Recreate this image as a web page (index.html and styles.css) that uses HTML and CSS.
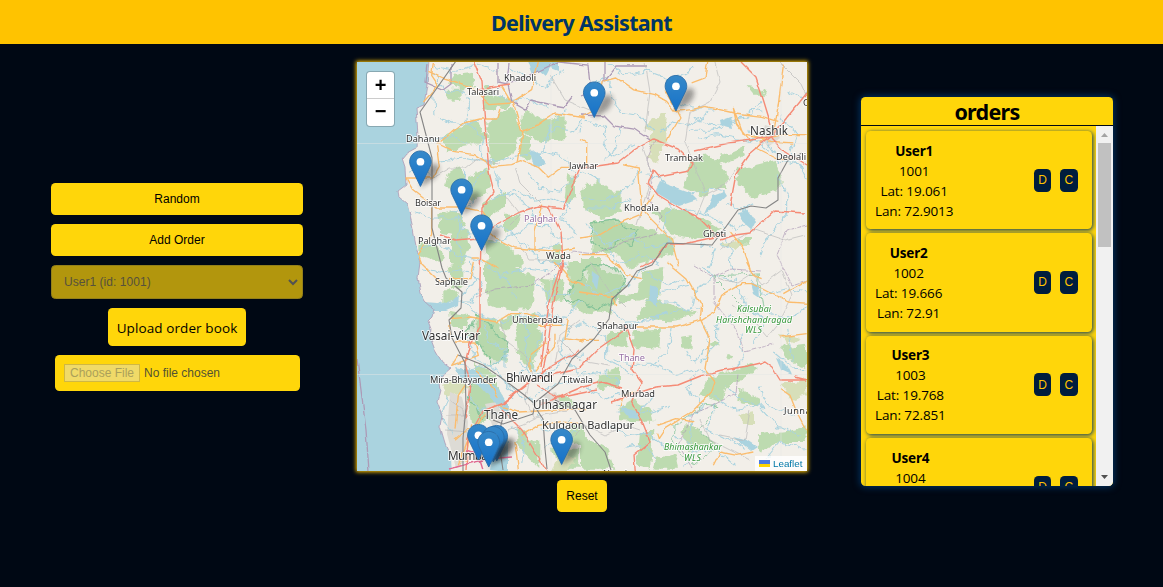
FILE: index.html
```html
<!DOCTYPE html>
<html lang="en">
<head>
<meta charset="utf-8">
<title>Delivery Assistant</title>
<link rel="stylesheet" href="styles.css">
</head>
<body>
<header class="topbar"><h1>Delivery Assistant</h1></header>
<main class="layout">
  <section class="controls">
    <button class="btn wide">Random</button>
    <button class="btn wide">Add Order</button>
    <div class="select"><span>User1 (id: 1001)</span><svg width="10" height="7" viewBox="0 0 10 7"><path d="M1 1l4 4 4-4" fill="none" stroke="#525252" stroke-width="2"/></svg></div>
    <label class="upload">Upload order book</label>
    <div class="file"><span class="choose">Choose File</span><span>No file chosen</span></div>
  </section>

  <section class="map-column">
    <div class="map">
      <svg class="tiles" viewBox="357 62 450 409" width="450" height="409">
        <defs>
          <filter id="rough" x="-5%" y="-5%" width="110%" height="110%"><feTurbulence type="fractalNoise" baseFrequency=".11" numOctaves="3" seed="4"/><feDisplacementMap in="SourceGraphic" scale="9" xChannelSelector="R" yChannelSelector="G"/></filter>
          <filter id="wavy" x="-5%" y="-5%" width="110%" height="110%"><feTurbulence type="fractalNoise" baseFrequency=".09" numOctaves="2" seed="8"/><feDisplacementMap in="SourceGraphic" scale="4" xChannelSelector="R" yChannelSelector="G"/></filter>
          <filter id="soft" x="-50%" y="-50%" width="200%" height="200%"><feGaussianBlur stdDeviation="3"/></filter>
          <linearGradient id="pin-fill" x1="0" y1="0" x2="0" y2="1"><stop offset="0" stop-color="#3689c9"/><stop offset="1" stop-color="#1672c9"/></linearGradient>
          <symbol id="pin" viewBox="-12.5 -41 45 45" overflow="visible">
            <path d="M0 0L4-16Q9-28 18-26Q24-21 15-10Z" fill="#222" opacity=".42" filter="url(#soft)"/>
            <path d="M0-40.5C-6.7-40.5-12-35.1-12-28.5c0 2.4.8 4.5 1.7 6.3L0-1l10.3-21.2c.9-1.8 1.7-3.9 1.7-6.3C12-35.1 6.7-40.5 0-40.5z" fill="url(#pin-fill)" stroke="#2a6da8"/>
            <circle cy="-28.5" r="4.3" fill="#fff"/>
          </symbol>
        </defs>
        <rect x="357" y="62" width="450" height="409" fill="#f2efe9"/>

        <g class="forest" filter="url(#rough)">
          <g transform="translate(355 58) scale(.3333)">
            <path d="M300 50l50-6 8 40-38 14-40-20zM275 95l45 0 0 35-45-3zM385 85l30 10 10 65-40-8zM420 110l60 18-30 28-35-18zM270 230l90-44 40 50-30 20-60 10-30 24-10-25zM400 190l70-45 30 75-30 70-60 30-10-70zM505 150l60 35 64-10 0 72-70 5-60-30zM500 225l35 20-5 60-35-10zM280 345l40-20 10 50-10 40-50-30zM340 355l60-30 8 60-50 46-20-10zM385 440l65-45 0 50-65 45zM250 470l50-15 30 40-20 40-50-10zM190 555l50 0 30 45-25 10-55-20zM285 495l50 20 10 60-20 50-40-10zM390 540l50 10 60 50 0 30-100 0zM640 350l20 20 0 50-30 20zM450 470l50 0-20 40-30 20zM595 560l25 10-5 50-30-10z"/>
          </g>
          <g transform="translate(580 58) scale(.3333)">
            <path d="M0 400l50-35 40 30 35 5 0 50-55 35-60-40zM500 90l50 5 10 18-40 0zM330 300l60-10 50 50 0 50-50 0-10 30-70-30zM390 310l100-45 5 30-60 20-50 20zM470 335l120-30 20 60-40 40-50 15-50-45zM40 490l90 0 90 30 60 20 0 50-140 40-20-40-80-10zM220 460l70-10 70 30 60 35-50 30-90-15zM0 600l60 0 0 40-60 0zM470 540l50 0-10 20-40 0z"/>
          </g>
          <g transform="translate(355 262) scale(.3333)">
            <path d="M275 10l50-10 0 70-40 10zM390 0l90 15 55 30 0 95-70 5-65-15-10-60zM560 45l65 5 0 70-50-5zM265 85l50 0-10 30-40 10zM365 165l50 5 40 50 0 80-60-10-30-60zM480 180l60-30 20 90-30 80-40-35zM285 150l60 10-5 35-50 0zM350 370l80 0 10 40-20 60-75 20-10-80zM360 305l60 30 0 20-60-10zM640 0l50 0 0 150-40-15zM430 170l70-20-40 50-30-10zM490 500l60 50 0 65-60-60zM590 560l80 0 0 60-60 0zM650 490l40 0 0 70-60-30zM580 410l60-5 30 30-60 0z"/>
          </g>
          <g transform="translate(580 262) scale(.3333)">
            <path d="M30 20l85 20 25 30-40 60-80 30-25-35zM190 25l60-10-10 90-60 5-60 20-5-30 60-5zM210 100l70 30 80 30-90 15-100-5zM160 205l80-5-5 60-75-5zM85 210l60 0 0 50-65-10zM300 225l35-5 0 40-30 0zM50 340l70-20 0 55-60 10zM115 440l50-30 50 40 5 30-100-5zM180 510l40 0-10 110-40-10zM380 350l90-30 50-15 10 20-90 50-20 45-60-20zM480 380l60 30-5 20-60-10zM600 255l75-10 7 70-60-20zM530 520l90-10 60-20 0 50-80 0-60 30zM310 490l40 5 55 50-80 20-20-30zM440 275l20 5-5 12-20 0zM390 240l30 5-20 15zM0 520l80 40 20 60-100 0zM230 590l60-10 10 40-80 0zM0 80l80 20 15 55-40-10-55-30z"/>
          </g>
        </g>
        <g class="scrub" filter="url(#rough)">
          <path d="M661 113l6 0-2 28-8 24-8-8 2-24-8-4zM722 243l18-2-6 10-12-4zM780 385l25-5 2 15-15 5zM560 450l15 10-8 12-16 0zM440 385l20-8 10 12-22 8zM780 333l20 5-15 8zM740 415l14-3 0 12-10 0z"/>
        </g>

        <g class="protected" filter="url(#rough)">
          <path d="M592 223l24-3 10 9 12 2-7 14-10-4-16 8-14-7zM590 265l26 2 9 15-14 22-16 6-14-9-12 3-6-8 12-10zM476 317l14 6 4 13 14 5-4 18-12 6-12-20-7-8-8-6 8-6zM470 385l16-4 12 14-4 20-14 4-4-14-8-4z"/>
          <path class="outline" d="M713 276l45-2 6 32-10 6-16-9-22-22zM674 426l32-22 12 2-12 15-5 9 14 17-20 18-15-10-7-16z"/>
        </g>

        <g class="urban">
          <path d="M450 392l12 5 6 25-3 39-9 7-9-34zM765 125l10 3 5 10-12 9-7-10zM485 404l11-2 8 16-11 10zM544 395l12-3 5 12-13 6z"/>
        </g>

        <g class="water" filter="url(#wavy)">
          <path d="M350 55L429 55 427 85 424 105 416 108 418 135 417 148 406 154 402 159 405 168 406 185 398 191 399 197 407 204 412 224 416 245 420 262 418 278 421 293 425 301 434 309 432 317 428 321 431 329 430 337 435 350 442 362 451 369 444 375 439 382 440 390 437 402 442 415 440 426 445 443 451 457 452 475 350 475z"/>
          <path d="M528 61l30 0 0 10-8-3-4 8-6-5-7 4zM530 151l9 4 7 9-12 3zM720 120l11-4 2 12-12-3zM660 182l15 5 14 5 8 8-18 6-24-14zM713 195l10-4 3 5-13 12-8 5zM738 212l10-2 8 12-4 8-10-9zM593 272l6 4-2 14-5-8zM650 284l7 3 0 20-8-6zM751 282l8 4 1 12-6-4zM776 358l10 5 6 12-11-5zM620 407l16 4 3 8-10-1zM733 436l12 3 12 8-6 4zM425 302l24 2 10-10-1 12-12 5-14 0zM455 367l24 5 19 16 10 17-1 12-13-16-12-14-22-9zM490 470l4-28 8-12 6 10 0 32z"/>
        </g>
        <g class="river" filter="url(#rough)">
          <g transform="translate(355 58) scale(.3333)">
            <path d="M240 25l60 15 70-20 60 20M235 50l35 50 60 0 10 30 0 50M235 100l5 70M460 25l50 30 60 30 60-50M400 90l60 40 60-10 60 30M330 185l50 50 0 60 30 25M250 310l70-10 50 10 50 0 90-20 60-10 60 20 40 60M230 250l60-20 50 30M395 330l-40 60 0 50-60 20M330 330l-10 130-10 80 10 80M420 330l20 80 60 10 40 60M410 420l80-20 50 30 50-10 60 30M520 340l30 50 60 10 60-50M160 340l50-10 30 30M170 460l60 20 70 0 50 60 60 10 60-20 60 50 80-20M420 500l60 30 40-30 60 0 20 40 60 0M195 570l60-10 50 30 80 20M520 560l40 50 80 10M640 150l-50 50-20 60-30 30M560 250l40-40 50 10 30-30M250 180l60 20 60-10M650 420l-30 60 50 50"/>
          </g>
          <g transform="translate(580 58) scale(.3333)">
            <path d="M80 20l50 30 70-10 80 30 60-40M20 90l60-30 20 30M90 100l30 60 60 10 40 50M20 190l60 20-10 50 30 40 60-40M120 210l-20 80-30 20M240 220l40-30 50 10 60-40M290 130l50 20 60 0M330 220l70 0 40-30 60-10 40-50M340 180l60 20 70-10 40-40 40 10M360 240l50-10 60 10 60 10 40 30M620 100l40 20 20-20M500 220l60 30 40 60 60 10 20 40M200 350l40 10 40 40 60 10 60-20 30 10M440 430l40 30 40-20M300 460l60 0 60 30 20 60M420 560l30 20 10 60M480 450l40 30-50 40-20-30M590 350l30 60 0 60-60 70-20 60M10 420l60 10 60-30 50-60M0 340l60 30M20 500l60 60 80-30 40 40 80-20M280 430l-30 80 30 60M360 560l50 10-20 60M600 180l50 40-20 60 40 60M80 570l40 50 60-30 60 30M20 450l70 0 70-30M0 220l10-50"/>
          </g>
          <g transform="translate(355 262) scale(.3333)">
            <path d="M200 20l60 10 60-10 60 40-30 60M220 140l60-20 60 0 40-40M320 120l50 40 70 20 60-20 60 0 60 10 60-50M280 220l60 10 20 60 60 30 60 90M290 300l60 20 60-10 50-30M380 170l20 70 50 20 0 60M490 150l30 60-10 60 30 60M530 60l60 40 70-10M550 150l60 40 70 0M430 340l60 60 50 20 20 60M530 420l50-50 70-10 40-30M490 300l50 40 50-10 40-50 60 0M560 210l-20 70-50 60M640 200l-30 70 60 60M280 400l-20 60 30 60M340 400l30 40 60 10M470 490l40 50-10 60M560 500l50 10 40-40M570 560l40-40 60-10M400 10l60 50 20 50M610 20l-30 80 0 70M440 40l70-20 80 10M345 0l20 60-50 40"/>
          </g>
          <g transform="translate(580 262) scale(.3333)">
            <path d="M0 60l60 40 80-30 60-60M90 140l60 50 60-20 60-20 90-10M140 180l70 0 50-30M10 180l70 50 0 60 80 50M100 290l60 20 70 0 60 30 60-20 50 20M280 190l-20 80-50 50M370 190l20 60-50 50-20-30M370 10l30 40-60 40-10 60-50-30-80 0M410 45l60 10 30 80 60 40-40 70M510 60l40 40 80-20 50 10M560 150l60 20 60-30M460 160l-50 30 0 60-50 50M480 220l10 70-30 30M580 270l60 50 40 0M350 330l-30 50 60 50-60 40M440 370l40 40 60 20 50 60 70 30M400 400l60 40 60-10M410 430l-30 70 60 30 60 30M540 370l20 60 80 30M220 400l-40 50-70 0M110 430l60 30 100-30M80 480l60 40 60-10 60 50M280 520l70 50 60-10 60 50M330 480l10 100-30 30M620 200l20 100M200 30l60 40 60-20M240 90l90-20M10 340l60-10 50 30M20 380l60 30 50-20M130 560l60-10 40 50M550 600l50-60 80 20"/>
          </g>
        </g>

        <g class="boundary" filter="url(#wavy)">
          <path d="M357 360l4 30 5 40 3 42M427 64l-2 18 18 8 8-6 0-20M498 63l0 20 10 2 4 17 14 8 5-10 16 4 17 3 8-10M509 63l-2 20 13-3 38-18 30 3 2 20 4 6-12 5M580 115l24 1 10 10 20 3 16 11M604 62l0 20 13-16 30 0"/>
          <path class="coast" d="M429 60L427 85 424 105 416 108 418 135 417 148 406 154 402 159 405 168 406 185 398 191 399 197 407 204 412 224 416 245 420 262 418 278 421 293 425 301 434 309 432 317 428 321 431 329 430 337 435 350 442 362 451 369 444 375 439 382 440 390 437 402 442 415 440 426 445 443 451 457"/>
          <path class="thin" d="M655 140l-8 20 6 18-6 20 15 18-6 18-32 8-30 12-22-3-20 20-20 14-36 4-20 8M694 265l20 12 18-8 28 2M714 278l0 24 24 30 6 20 30-8M738 375l-2 18-26 14-18 7-6 16-8 14 14 24M807 225l-20 5-10 25 15 30 15-5"/>
        </g>

        <g class="minor" filter="url(#wavy)">
          <path d="M550 75l15 25 25 10M645 62l5 30-5 40M715 62l5 20-10 20-20 10-5 30 20 50M780 62l20 20 7 15M430 180l20-12 15 0 10-8 25 3M515 168l5 15 20 20M505 195l15 20-10 10M520 245l10 15 20 0 20 10M642 145l10 30-15 50M720 250l15-10 20-10 30 10 20-5M735 170l-10 15-20 10-8 20M590 262l20 30 15 15M580 320l-20 15-5 30M500 320l5 20 20 15 7 20M508 430l15-5 20-10 25-4M570 440l15-15 20 10 20-10 15 5M717 278l20 5 15-10 10 12 20-15 10 25-15 30-10 12-10-12-25-20M450 400l13 10 2 20M447 415l20 0M445 430l22 2M750 410l-5 30-25-5M700 420l10 20 40 20M530 380l-5 20 10 18M560 340l20 20 30 5"/>
        </g>
        <g class="secondary" filter="url(#wavy)">
          <g transform="translate(355 58) scale(.3333)"><path d="M220 40l45 20 80 25 60 55 70-5 25 85 40-15 60-40 90 15M235 12l-5 40 20 30-45 50M470 135l-30-50M475 130l55-35 20-83M245 260l80-65 50-12 50 0 10-30M245 255l50 25 60 10 55 35 60-5 30-12 50 20 30 30 40-30 30 0M245 265l8 60-20 35-80 0 20 35 70 55 90 0 50 10 20 30M230 450l0 80-40 60 10 25M390 510l40 35 50 25 130 10 50-10M560 440l-20 80 0 60M350 600l20 0 60 30M505 215l-15 95"/></g>
          <g transform="translate(580 58) scale(.3333)"><path d="M0 180l55-30 15-80 40-10 50 35 65 15 35 20 25 30 50-5 40-10 90 20 80 10 50 15M285 150l15 30-30 50-10 20M385 0l-10 60-40 15M280 140l-25-40M130 320l45 10 10 120 30 35 60 60 20 80M0 540l60-10 60-35 60-25 40-60M450 520l40 50 20 60M610 20l-15 120-15 90M460 150l30 80 80 20 70 5M460 150l10 50 40 50M560 240l50-10 70 0M560 235l-30 35 60 30 80 5M0 245l20 10 0 70M0 590l80 0 40 40"/></g>
          <g transform="translate(355 262) scale(.3333)"><path d="M195 0l60 60 40-10 50 0 10-50M285 170l60-5 80 15 40-25 50 0 60 20M300 240l60 0 10 40-80 30 20-30M360 330l50 40 20 40M285 180l0 50M430 430l60 20 200-10M500 520l50-30 60-10 80 5M420 430l-40 40-40 60-30 80M300 500l10-100 20-30M300 535l40-35M330 600l20-110M480 540l10 80M540 325l60-80 0-30M600 0l50 60 40 10M550 190l70 0M640 170l-10 60 60 10M525 330l0-50 50-40"/></g>
          <g transform="translate(580 262) scale(.3333)"><path d="M110 0l30 40 45 10M260 0l60 50 45 80-5 45-70 20-125 0M360 170l30 60-15 90 30 40-10 30-60 60-80 50-20 30-5-15M365 175l40-25 20-50 60-35 30 0 50 25 60 30 70 5M500 0l20 40 25 10M600 225l80-10M600 380l30 20 20 50 32 60M0 235l60 0M120 435l10-35 45-10M230 490l60-20 50 10M400 610l20-40 50 10 50-10M0 90l100 15 10 30M680 55l-70 40"/></g>
        </g>
        <g class="primary" filter="url(#wavy)">
          <path d="M474 62l8 20 2 30 5 60 5 20-12 15-1 34-1 37 0 50-10 15-5 20 5 20-2 20-3 15M478 90l12-2 20-3M741 62l15 15 8 25 7 23M807 93l-18 22-18 22-42 6-35 8M771 136l-21 18-14 20-6 32M771 138l14 14 22 14M583 168l35-5 15-12 20-12 25 10 15 15-4 7-30 6-6-7-5 13 10 12 25 15 15 7 17 17 10 1M720 240l15-5 15-2 25-22 30 2M480 235l15-10 25-13 18-6 25 3 8-20 10-25M440 235l15 5 25-2M548 207l13 25 2 30-10 44-6 46-6 27M720 236l-37 8-15 0-12 15-15 8M807 380l-27 0-8-13-7-5-17 4-25 4-20 5-25 10-22 2-45 15M807 380l-12-3M562 262l-13 40-8 65M580 350l-30 17-47 37M625 325l9 25-2 20 10 13-10 17 10 22 8 20-16 13 2 25M503 403l-20 8-15 27-2 32M503 403l30-24 45-10 20-20 28-20M540 405l42-18 20-5 20 6M502 410l20 20 25 42M537 385l20 13 40-8"/>
        </g>
        <path class="primary strong" d="M450 469l17-5 20-5 25-2M466 450l12 4 5 16" filter="url(#wavy)"/>
        <g class="rail">
          <path d="M456 61L420 112l12 46 0 70 10 40 4 10 16 14-1 16-12 12 3 18 13 25 1 45-3 30 0 35M458 355l25 10 20 14 20 15 12 10-2 10-30 10-10-4M503 417l-5 20 5 33M533 404l25-20 14-25 22-20 15-20 3-20 15-13 10-15 15-6 15-22 45 2 13-17 13-18 13-4 15 2 12-8 0-22 10-18 14-7M533 404l10 15 2 30 2 20M555 400l20 10 15 25 15 17 6 18"/>
        </g>
        <path d="M551 62v409M781 62v409M357 143.5h450M357 374.5h450" stroke="#e5e7e5" stroke-width=".7" opacity=".7"/>

        <g class="places">
          <text x="504" y="81" textLength="32">Khadoli</text>
          <text x="467" y="95" textLength="32">Talasari</text>
          <text x="406" y="142" textLength="34">Dahanu</text>
          <text x="415" y="206" textLength="26">Boisar</text>
          <text x="418" y="244" textLength="33">Palghar</text>
          <text x="524" y="222" textLength="33" class="district">Palghar</text>
          <text x="569" y="169" textLength="29">Jawhar</text>
          <text x="546" y="259" textLength="25">Wada</text>
          <text x="750" y="135" textLength="38" class="city">Nashik</text>
          <text x="665" y="161" textLength="38">Trambak</text>
          <text x="776" y="160" textLength="30">Deolali</text>
          <text x="624" y="211" textLength="35">Khodala</text>
          <text x="703" y="237" textLength="23">Ghoti</text>
          <text x="803" y="106">C</text>
          <text x="435" y="285" textLength="33">Saphale</text>
          <text x="512" y="323" textLength="51">Umberpada</text>
          <text x="422" y="340" textLength="58" class="town">Vasai-Virar</text>
          <text x="430" y="383" textLength="67">Mira-Bhayander</text>
          <text x="506" y="382" textLength="47" class="town">Bhiwandi</text>
          <text x="562" y="383" textLength="31">Titwala</text>
          <text x="533" y="409" textLength="64" class="town">Ulhasnagar</text>
          <text x="484" y="419" textLength="34" class="town">Thane</text>
          <text x="542" y="429" textLength="92" class="town small">Kulgaon Badlapur</text>
          <text x="448" y="460" textLength="42" class="town">Mumbai</text>
          <text x="597" y="329" textLength="41">Shahapur</text>
          <text x="619" y="361" textLength="26" class="district">Thane</text>
          <text x="621" y="397" textLength="34">Murbad</text>
          <text x="784" y="414" textLength="31">Junnar</text>
          <text x="603" y="477" textLength="24">Neral</text>
          <text x="737" y="312" textLength="34" class="reserve">Kalsubai</text>
          <text x="716" y="323" textLength="76" class="reserve">Harishchandragad</text>
          <text x="745" y="333" textLength="17" class="reserve">WLS</text>
          <text x="664" y="450" textLength="58" class="reserve">Bhimashankar</text>
          <text x="684" y="461" textLength="17" class="reserve">WLS</text>
        </g>
        <g class="pins">
          <use href="#pin" x="664.7" y="75" width="40.5" height="40.5"/>
          <use href="#pin" x="583" y="81.5" width="40.5" height="40.5"/>
          <use href="#pin" x="409.2" y="150.5" width="40.5" height="40.5"/>
          <use href="#pin" x="450.4" y="178.5" width="40.5" height="40.5"/>
          <use href="#pin" x="470.3" y="214.5" width="40.5" height="40.5"/>
          <use href="#pin" x="467.2" y="424" width="40.5" height="40.5"/>
          <use href="#pin" x="485.5" y="425" width="40.5" height="40.5"/>
          <use href="#pin" x="482" y="426" width="40.5" height="40.5"/>
          <use href="#pin" x="550.4" y="428.5" width="40.5" height="40.5"/>
          <use href="#pin" x="477.5" y="431" width="40.5" height="40.5"/>
        </g>
      </svg>
      <div class="zoom"><span>+</span><span>−</span></div>
      <div class="attribution"><i class="flag"></i><span>Leaflet</span></div>
    </div>
    <button class="btn reset">Reset</button>
  </section>

  <section class="orders">
    <h2>orders</h2>
    <div class="orders-body">
      <div class="list">
        <article class="card"><div class="info"><b>User1</b><span>1001</span><span>Lat: 19.061</span><span>Lan: 72.9013</span></div><div class="actions"><button>D</button><button>C</button></div></article>
        <article class="card"><div class="info"><b>User2</b><span>1002</span><span>Lat: 19.666</span><span>Lan: 72.91</span></div><div class="actions"><button>D</button><button>C</button></div></article>
        <article class="card"><div class="info"><b>User3</b><span>1003</span><span>Lat: 19.768</span><span>Lan: 72.851</span></div><div class="actions"><button>D</button><button>C</button></div></article>
        <article class="card"><div class="info"><b>User4</b><span>1004</span><span>Lat: 19.697</span><span>Lan: 72.771</span></div><div class="actions"><button>D</button><button>C</button></div></article>
      </div>
      <div class="scrollbar">
        <svg width="17" height="17" viewBox="0 0 17 17"><path d="M5 11l3.5-4 3.5 4z" fill="#a3a3a3"/></svg>
        <div class="thumb"></div>
        <svg width="17" height="17" viewBox="0 0 17 17"><path d="M5 6h7l-3.5 4z" fill="#505050"/></svg>
      </div>
    </div>
  </section>
</main>
</body>
</html>
```

FILE: styles.css
```css
* { box-sizing: border-box; }
body { margin: 0; height: 587px; overflow: hidden; background: #000814; font-family: "Open Sans", "Noto Sans", sans-serif; display: flex; flex-direction: column; }
button { border: 0; margin: 0; padding: 0; font-family: "Liberation Sans", Arial, sans-serif; color: #000; }
.topbar { height: 44px; flex: none; background: #ffc300; color: #003566; display: flex; align-items: center; justify-content: center; padding-top: 2px; }
h1 { margin: 0; font-family: "Noto Sans", sans-serif; font-size: 21.5px; line-height: 30px; font-weight: 700; letter-spacing: -.68px; }
.layout { display: flex; align-items: flex-start; gap: 54px; padding-left: 51px; }

.controls { width: 252px; padding-top: 139px; display: flex; flex-direction: column; align-items: center; gap: 9px; }
.btn { height: 32px; border-radius: 4.5px; background: #ffd60a; font-size: 12px; }
.wide { width: 252px; }
.select { width: 252px; height: 34px; border: 1px solid #94801a; border-radius: 4.5px; background: #b2960d; color: #56513c; display: flex; align-items: center; justify-content: space-between; padding: 0 4px 0 12px; font: 12px "Liberation Sans", Arial, sans-serif; letter-spacing: .04px; }
.upload { width: 138px; height: 38px; border-radius: 4.5px; background: #ffd60a; font-size: 13.5px; line-height: 40px; text-align: center; letter-spacing: .1px; white-space: nowrap; }
.file { width: 245px; height: 36px; margin-right: -1px; border-radius: 4.5px; background: #ffd60a; color: #525233; display: flex; align-items: center; gap: 4px; padding-left: 9px; font: 12px "Liberation Sans", Arial, sans-serif; }
.choose { width: 76px; height: 18px; line-height: 16px; text-align: center; background: #f0da68; border: 1px solid #cfb744; color: #aba05a; }

.map-column { width: 450px; padding-top: 18px; display: flex; flex-direction: column; align-items: center; gap: 9px; }
.map { position: relative; width: 450px; height: 409px; box-shadow: 0 0 4px 1px #ffc300; }
.reset { width: 50px; }
.tiles { display: block; }
.forest { fill: #bddbb0; }
.scrub { fill: #d7dfb9; }
.protected { fill: #a8d2a0; fill-opacity: .28; stroke: #88c49a; stroke-width: 1.3; }
.outline { fill: none; stroke-width: .8; }
.urban { fill: #dddbd5; }
.water { fill: #aad3df; }
.river { fill: none; stroke: #aad3df; stroke-width: 3.2px; stroke-linejoin: round; }
.boundary { fill: none; stroke: #ad9ab6; stroke-width: 1.3; }
.boundary .thin { stroke-width: .7; stroke-dasharray: 5 1; }
.boundary .coast { stroke-width: .8; }
.minor { fill: none; stroke: #bcbcbc; stroke-width: .7; }
.secondary { fill: none; stroke: #fbbc6d; stroke-width: 4px; stroke-linejoin: round; }
.primary { fill: none; stroke: #f58b76; stroke-width: 1.4; stroke-linejoin: round; }
.strong { stroke: #e36b93; }
.rail { fill: none; stroke: #858585; stroke-width: 1.1; stroke-linejoin: round; }
.places { font: 9.2px "Noto Sans", sans-serif; fill: #333; stroke: #fffc; stroke-width: 1.8px; paint-order: stroke; stroke-linejoin: round; }
.city, .town { font-size: 11.7px; }
.small { font-size: 11px; }
.district { fill: #9871a5; }
.reserve { fill: #329536; font-size: 8.8px; font-style: italic; }
.zoom { position: absolute; left: 9px; top: 9px; width: 29px; height: 56px; border: 1.5px solid #0003; border-radius: 4px; background: #fff; background-clip: padding-box; overflow: hidden; }
.zoom span { display: block; height: 26px; text-align: center; font: bold 20px/26px "Liberation Sans", sans-serif; color: #000; }
.zoom span + span { border-top: 1px solid #ccc; line-height: 25px; }
.attribution { position: absolute; right: 0; bottom: 0; width: 52px; height: 15px; background: #fffc; display: flex; align-items: center; gap: 3px; padding: 0 0 1px 4px; color: #0078a8; font: 9.8px "Liberation Sans", Arial, sans-serif; }
.flag { width: 11px; height: 7px; background: linear-gradient(#4c7be1 50%, #ffd500 50%); }

.orders { width: 252px; height: 389px; margin-top: 53px; border-radius: 4.5px; overflow: hidden; background: #ffd60a; box-shadow: 0 0 7px 1px #003566; display: flex; flex-direction: column; }
h2 { margin: 0; height: 29px; flex: none; border-bottom: 1px solid #000814; font-family: "Noto Sans", sans-serif; font-size: 21.5px; line-height: 29px; letter-spacing: -.7px; text-align: center; }
.orders-body { flex: 1; min-height: 0; display: flex; }
.list { width: 235px; overflow: hidden; display: flex; flex-direction: column; gap: 4px; padding: 5px 4px 0 5px; }
.card { height: 98.3px; flex: none; display: flex; align-items: center; justify-content: space-between; padding: 0 14.5px 0 9px; border-radius: 4.5px; background: #ffd60a; box-shadow: 1px 1px 4px #003566; }
.info { display: flex; flex-direction: column; align-items: center; font-size: 13.5px; line-height: 20px; letter-spacing: -.12px; padding-top: 1.4px; }
.info b { font-family: "Noto Sans", sans-serif; letter-spacing: -.2px; }
.actions { display: flex; gap: 9px; }
.actions button { width: 17.3px; height: 23px; border-radius: 4.5px; background: #001d3d; color: #ffc300; font-size: 12px; }
.scrollbar { width: 17px; background: #f1f1f1; display: flex; flex-direction: column; align-items: center; }
.thumb { width: 13px; height: 104px; margin-bottom: auto; background: #c1c1c1; }
```
